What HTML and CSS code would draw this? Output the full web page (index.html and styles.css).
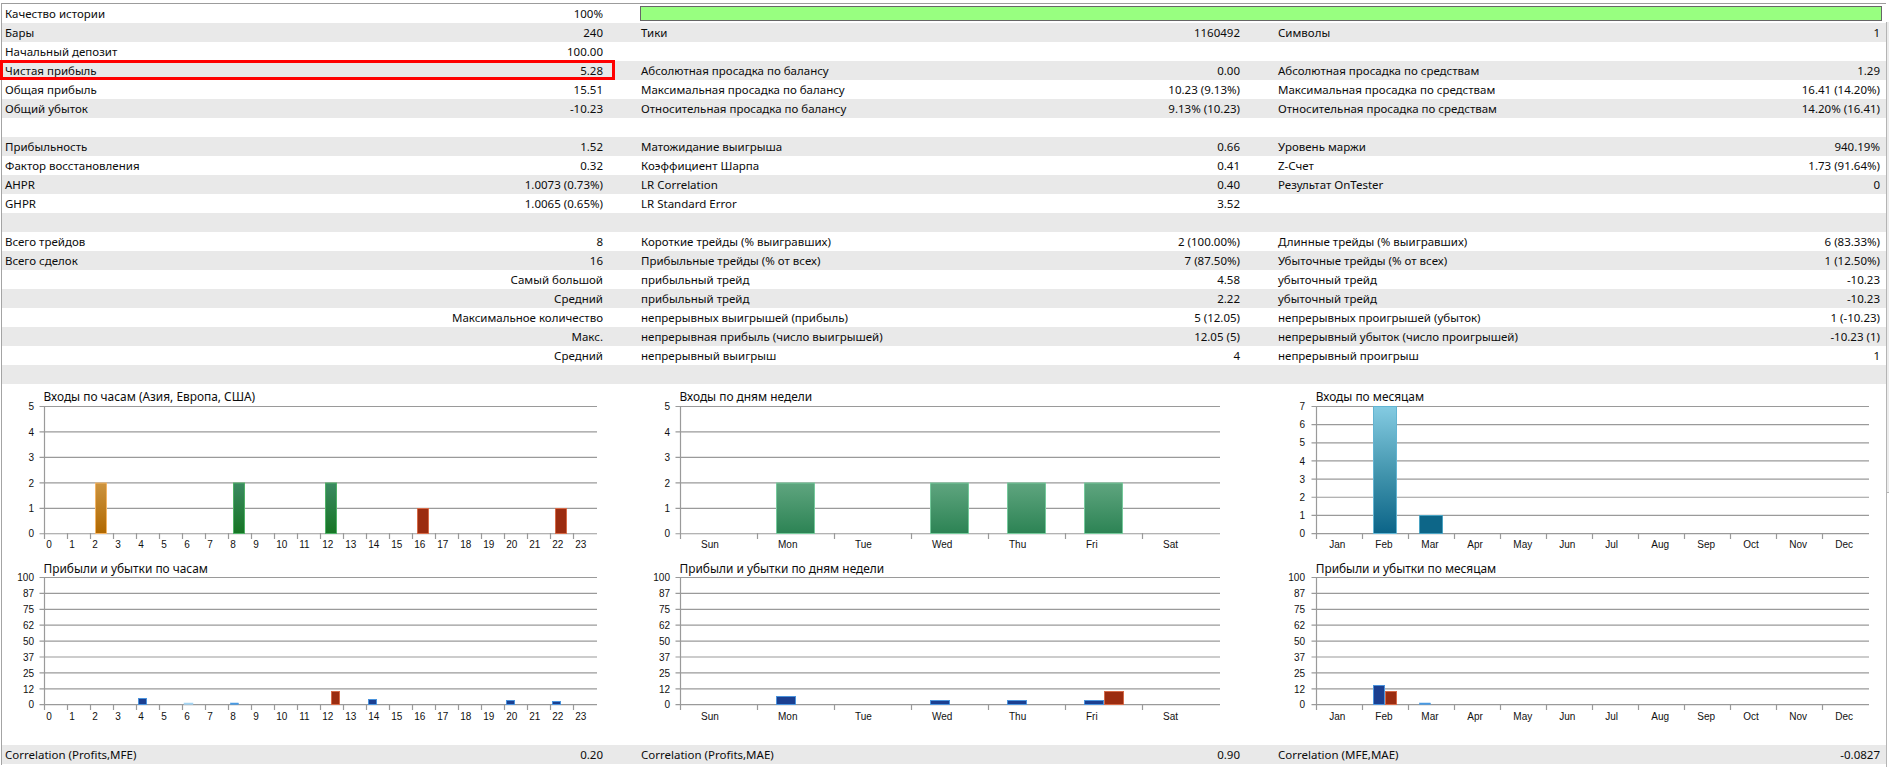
FILE: index.html
```html
<!DOCTYPE html>
<html lang="ru">
<head>
<meta charset="utf-8">
<title>Отчет тестера</title>
<link rel="stylesheet" href="styles.css">
</head>
<body>
<div class="window">
<main class="report">
<div class="row"><span>Качество истории</span><span class="v">100%</span><div class="quality"></div></div>
<div class="row"><span>Бары</span><span class="v">240</span><span>Тики</span><span class="v">1160492</span><span>Символы</span><span class="v">1</span></div>
<div class="row"><span>Начальный депозит</span><span class="v">100.00</span></div>
<div class="row hl"><span>Чистая прибыль</span><span class="v">5.28</span><span>Абсолютная просадка по балансу</span><span class="v">0.00</span><span>Абсолютная просадка по средствам</span><span class="v">1.29</span></div>
<div class="row"><span>Общая прибыль</span><span class="v">15.51</span><span>Максимальная просадка по балансу</span><span class="v">10.23 (9.13%)</span><span>Максимальная просадка по средствам</span><span class="v">16.41 (14.20%)</span></div>
<div class="row"><span>Общий убыток</span><span class="v">-10.23</span><span>Относительная просадка по балансу</span><span class="v">9.13% (10.23)</span><span>Относительная просадка по средствам</span><span class="v">14.20% (16.41)</span></div>
<div class="row"></div>
<div class="row"><span>Прибыльность</span><span class="v">1.52</span><span>Матожидание выигрыша</span><span class="v">0.66</span><span>Уровень маржи</span><span class="v">940.19%</span></div>
<div class="row"><span>Фактор восстановления</span><span class="v">0.32</span><span>Коэффициент Шарпа</span><span class="v">0.41</span><span>Z-Счет</span><span class="v">1.73 (91.64%)</span></div>
<div class="row"><span>AHPR</span><span class="v">1.0073 (0.73%)</span><span>LR Correlation</span><span class="v">0.40</span><span>Результат OnTester</span><span class="v">0</span></div>
<div class="row"><span>GHPR</span><span class="v">1.0065 (0.65%)</span><span>LR Standard Error</span><span class="v">3.52</span></div>
<div class="row"></div>
<div class="row"><span>Всего трейдов</span><span class="v">8</span><span>Короткие трейды (% выигравших)</span><span class="v">2 (100.00%)</span><span>Длинные трейды (% выигравших)</span><span class="v">6 (83.33%)</span></div>
<div class="row"><span>Всего сделок</span><span class="v">16</span><span>Прибыльные трейды (% от всех)</span><span class="v">7 (87.50%)</span><span>Убыточные трейды (% от всех)</span><span class="v">1 (12.50%)</span></div>
<div class="row"><span></span><span class="v">Самый большой</span><span>прибыльный трейд</span><span class="v">4.58</span><span>убыточный трейд</span><span class="v">-10.23</span></div>
<div class="row"><span></span><span class="v">Средний</span><span>прибыльный трейд</span><span class="v">2.22</span><span>убыточный трейд</span><span class="v">-10.23</span></div>
<div class="row"><span></span><span class="v">Максимальное количество</span><span>непрерывных выигрышей (прибыль)</span><span class="v">5 (12.05)</span><span>непрерывных проигрышей (убыток)</span><span class="v">1 (-10.23)</span></div>
<div class="row"><span></span><span class="v">Макс.</span><span>непрерывная прибыль (число выигрышей)</span><span class="v">12.05 (5)</span><span>непрерывный убыток (число проигрышей)</span><span class="v">-10.23 (1)</span></div>
<div class="row"><span></span><span class="v">Средний</span><span>непрерывный выигрыш</span><span class="v">4</span><span>непрерывный проигрыш</span><span class="v">1</span></div>
<div class="row"></div>

<section class="charts">
<!-- entries by hour -->
<svg class="chart" width="638" height="171" viewBox="2 384 638 171">
<defs>
<linearGradient id="orange" x2="0" y2="1"><stop offset="0" stop-color="#cc9440"/><stop offset="1" stop-color="#b06800"/></linearGradient>
<linearGradient id="green" x2="0" y2="1"><stop offset="0" stop-color="#3c8a62"/><stop offset="1" stop-color="#167524"/></linearGradient>
<linearGradient id="mint" x2="0" y2="1"><stop offset="0" stop-color="#5fa57f"/><stop offset="1" stop-color="#2c8354"/></linearGradient>
<linearGradient id="teal" x2="0" y2="1"><stop offset="0" stop-color="#84cbe2"/><stop offset=".55" stop-color="#3f92ab"/><stop offset="1" stop-color="#0b6488"/></linearGradient>
</defs>
<text class="title" x="43.5" y="401">Входы по часам (Азия, Европа, США)</text>
<path class="grid" d="M39.5 406.5H597M39.5 431.95H597M39.5 457.4H597M39.5 482.85H597M39.5 508.3H597M39.5 533.75H597"/>
<path class="grid" d="M44.5 406V539m23-6v6m23-6v6m23-6v6m23-6v6m23-6v6m23-6v6m23-6v6m23-6v6m23-6v6m23-6v6m23-6v6m23-6v6m23-6v6m23-6v6m23-6v6m23-6v6m23-6v6m23-6v6m23-6v6m23-6v6m23-6v6m23-6v6m23-6v6"/>
<g class="ya"><text x="34" y="410">5</text><text x="34" y="435.5">4</text><text x="34" y="461">3</text><text x="34" y="486.5">2</text><text x="34" y="512">1</text><text x="34" y="537.3">0</text></g>
<rect class="b-orange" x="95.5" y="483" width="11" height="50.5" fill="url(#orange)"/>
<rect class="b-green" x="233.5" y="483" width="11" height="50.5" fill="url(#green)"/>
<rect class="b-green" x="325.5" y="483" width="11" height="50.5" fill="url(#green)"/>
<rect class="b-red" x="417.5" y="508.5" width="11" height="25"/>
<rect class="b-red" x="555.5" y="508.5" width="11" height="25"/>
<g class="xa"><text x="46.3" y="548.4">0</text><text x="69.3" y="548.4">1</text><text x="92.3" y="548.4">2</text><text x="115.3" y="548.4">3</text><text x="138.3" y="548.4">4</text><text x="161.3" y="548.4">5</text><text x="184.3" y="548.4">6</text><text x="207.3" y="548.4">7</text><text x="230.3" y="548.4">8</text><text x="253.3" y="548.4">9</text><text x="276.3" y="548.4">10</text><text x="299.3" y="548.4">11</text><text x="322.3" y="548.4">12</text><text x="345.3" y="548.4">13</text><text x="368.3" y="548.4">14</text><text x="391.3" y="548.4">15</text><text x="414.3" y="548.4">16</text><text x="437.3" y="548.4">17</text><text x="460.3" y="548.4">18</text><text x="483.3" y="548.4">19</text><text x="506.3" y="548.4">20</text><text x="529.3" y="548.4">21</text><text x="552.3" y="548.4">22</text><text x="575.3" y="548.4">23</text></g>
</svg>
<!-- entries by weekday -->
<svg class="chart" width="629" height="171" viewBox="640 384 629 171">
<text class="title" x="679.5" y="401">Входы по дням недели</text>
<path class="grid" d="M675.5 406.5H1220M675.5 431.95H1220M675.5 457.4H1220M675.5 482.85H1220M675.5 508.3H1220M675.5 533.75H1220"/>
<path class="grid" d="M680.5 406V539m77-6v6m77-6v6m77-6v6m77-6v6m77-6v6m77-6v6"/>
<g class="ya"><text x="670" y="410">5</text><text x="670" y="435.5">4</text><text x="670" y="461">3</text><text x="670" y="486.5">2</text><text x="670" y="512">1</text><text x="670" y="537.3">0</text></g>
<rect class="b-mint" x="776.5" y="483" width="38" height="50.5" fill="url(#mint)"/>
<rect class="b-mint" x="930.5" y="483" width="38" height="50.5" fill="url(#mint)"/>
<rect class="b-mint" x="1007.5" y="483" width="38" height="50.5" fill="url(#mint)"/>
<rect class="b-mint" x="1084.5" y="483" width="38" height="50.5" fill="url(#mint)"/>
<g class="xa"><text x="701" y="548.4">Sun</text><text x="778" y="548.4">Mon</text><text x="855" y="548.4">Tue</text><text x="932" y="548.4">Wed</text><text x="1009" y="548.4">Thu</text><text x="1086" y="548.4">Fri</text><text x="1163" y="548.4">Sat</text></g>
</svg>
<!-- entries by month -->
<svg class="chart" width="617" height="171" viewBox="1269 384 617 171">
<text class="title" x="1315.7" y="401">Входы по месяцам</text>
<path class="grid" d="M1311.5 406.5H1869M1311.5 424.65H1869M1311.5 442.8H1869M1311.5 460.95H1869M1311.5 479.1H1869M1311.5 497.25H1869M1311.5 515.4H1869M1311.5 533.55H1869"/>
<path class="grid" d="M1316.5 406V539m46-6v6m46-6v6m46-6v6m46-6v6m46-6v6m46-6v6m46-6v6m46-6v6m46-6v6m46-6v6m46-6v6"/>
<g class="ya"><text x="1305" y="410">7</text><text x="1305" y="428.2">6</text><text x="1305" y="446.3">5</text><text x="1305" y="464.5">4</text><text x="1305" y="482.6">3</text><text x="1305" y="500.8">2</text><text x="1305" y="519">1</text><text x="1305" y="537.2">0</text></g>
<rect class="b-teal" x="1373.5" y="406.5" width="23" height="127" fill="url(#teal)"/>
<rect class="b-teal2" x="1419.5" y="515.5" width="23" height="18"/>
<g class="xa"><text x="1329.3" y="548.4">Jan</text><text x="1375.3" y="548.4">Feb</text><text x="1421.3" y="548.4">Mar</text><text x="1467.3" y="548.4">Apr</text><text x="1513.3" y="548.4">May</text><text x="1559.3" y="548.4">Jun</text><text x="1605.3" y="548.4">Jul</text><text x="1651.3" y="548.4">Aug</text><text x="1697.3" y="548.4">Sep</text><text x="1743.3" y="548.4">Oct</text><text x="1789.3" y="548.4">Nov</text><text x="1835.3" y="548.4">Dec</text></g>
</svg>
<!-- profit by hour -->
<svg class="chart" width="638" height="190" viewBox="2 555 638 190">
<text class="title" x="43.5" y="572.5">Прибыли и убытки по часам</text>
<path class="grid" d="M39.5 577.5H597M39.5 593.4H597M39.5 609.3H597M39.5 625.2H597M39.5 641.1H597M39.5 657H597M39.5 672.9H597M39.5 688.8H597M39.5 704.7H597"/>
<path class="grid" d="M44.5 577V710m23-6v6m23-6v6m23-6v6m23-6v6m23-6v6m23-6v6m23-6v6m23-6v6m23-6v6m23-6v6m23-6v6m23-6v6m23-6v6m23-6v6m23-6v6m23-6v6m23-6v6m23-6v6m23-6v6m23-6v6m23-6v6m23-6v6m23-6v6"/>
<g class="ya"><text x="34" y="581">100</text><text x="34" y="597">87</text><text x="34" y="613">75</text><text x="34" y="629">62</text><text x="34" y="644.8">50</text><text x="34" y="660.7">37</text><text x="34" y="676.6">25</text><text x="34" y="692.5">12</text><text x="34" y="708.4">0</text></g>
<rect class="b-blue" x="138.5" y="698.5" width="8" height="6"/>
<rect class="b-faint" x="184" y="703" width="9" height="1.5"/>
<rect class="b-sky" x="230.5" y="703" width="8" height="1.5"/>
<rect class="b-red" x="331.5" y="691.5" width="8" height="13"/>
<rect class="b-blue" x="368.5" y="699.5" width="8" height="5"/>
<rect class="b-blue" x="506.5" y="700.5" width="8" height="4"/>
<rect class="b-blue" x="552.5" y="701.5" width="8" height="3"/>
<g class="xa"><text x="46.3" y="719.6">0</text><text x="69.3" y="719.6">1</text><text x="92.3" y="719.6">2</text><text x="115.3" y="719.6">3</text><text x="138.3" y="719.6">4</text><text x="161.3" y="719.6">5</text><text x="184.3" y="719.6">6</text><text x="207.3" y="719.6">7</text><text x="230.3" y="719.6">8</text><text x="253.3" y="719.6">9</text><text x="276.3" y="719.6">10</text><text x="299.3" y="719.6">11</text><text x="322.3" y="719.6">12</text><text x="345.3" y="719.6">13</text><text x="368.3" y="719.6">14</text><text x="391.3" y="719.6">15</text><text x="414.3" y="719.6">16</text><text x="437.3" y="719.6">17</text><text x="460.3" y="719.6">18</text><text x="483.3" y="719.6">19</text><text x="506.3" y="719.6">20</text><text x="529.3" y="719.6">21</text><text x="552.3" y="719.6">22</text><text x="575.3" y="719.6">23</text></g>
</svg>
<!-- profit by weekday -->
<svg class="chart" width="629" height="190" viewBox="640 555 629 190">
<text class="title" x="679.5" y="572.5">Прибыли и убытки по дням недели</text>
<path class="grid" d="M675.5 577.5H1220M675.5 593.4H1220M675.5 609.3H1220M675.5 625.2H1220M675.5 641.1H1220M675.5 657H1220M675.5 672.9H1220M675.5 688.8H1220M675.5 704.7H1220"/>
<path class="grid" d="M680.5 577V710m77-6v6m77-6v6m77-6v6m77-6v6m77-6v6m77-6v6"/>
<g class="ya"><text x="670" y="581">100</text><text x="670" y="597">87</text><text x="670" y="613">75</text><text x="670" y="629">62</text><text x="670" y="644.8">50</text><text x="670" y="660.7">37</text><text x="670" y="676.6">25</text><text x="670" y="692.5">12</text><text x="670" y="708.4">0</text></g>
<rect class="b-blue" x="776.5" y="696.5" width="19" height="8"/>
<rect class="b-blue" x="930.5" y="700.5" width="19" height="4"/>
<rect class="b-blue" x="1007.5" y="700.5" width="19" height="4"/>
<rect class="b-blue" x="1084.5" y="700.5" width="19" height="4"/>
<rect class="b-red" x="1104.5" y="691.5" width="19" height="13"/>
<g class="xa"><text x="701" y="719.6">Sun</text><text x="778" y="719.6">Mon</text><text x="855" y="719.6">Tue</text><text x="932" y="719.6">Wed</text><text x="1009" y="719.6">Thu</text><text x="1086" y="719.6">Fri</text><text x="1163" y="719.6">Sat</text></g>
</svg>
<!-- profit by month -->
<svg class="chart" width="617" height="190" viewBox="1269 555 617 190">
<text class="title" x="1315.7" y="572.5">Прибыли и убытки по месяцам</text>
<path class="grid" d="M1311.5 577.5H1869M1311.5 593.4H1869M1311.5 609.3H1869M1311.5 625.2H1869M1311.5 641.1H1869M1311.5 657H1869M1311.5 672.9H1869M1311.5 688.8H1869M1311.5 704.7H1869"/>
<path class="grid" d="M1316.5 577V710m46-6v6m46-6v6m46-6v6m46-6v6m46-6v6m46-6v6m46-6v6m46-6v6m46-6v6m46-6v6m46-6v6"/>
<g class="ya"><text x="1305" y="581">100</text><text x="1305" y="597">87</text><text x="1305" y="613">75</text><text x="1305" y="629">62</text><text x="1305" y="644.8">50</text><text x="1305" y="660.7">37</text><text x="1305" y="676.6">25</text><text x="1305" y="692.5">12</text><text x="1305" y="708.4">0</text></g>
<rect class="b-blue" x="1373.5" y="685.5" width="11" height="19"/>
<rect class="b-red" x="1385.5" y="691.5" width="11" height="13"/>
<rect class="b-sky" x="1419.5" y="703" width="11" height="1.5"/>
<g class="xa"><text x="1329.3" y="719.6">Jan</text><text x="1375.3" y="719.6">Feb</text><text x="1421.3" y="719.6">Mar</text><text x="1467.3" y="719.6">Apr</text><text x="1513.3" y="719.6">May</text><text x="1559.3" y="719.6">Jun</text><text x="1605.3" y="719.6">Jul</text><text x="1651.3" y="719.6">Aug</text><text x="1697.3" y="719.6">Sep</text><text x="1743.3" y="719.6">Oct</text><text x="1789.3" y="719.6">Nov</text><text x="1835.3" y="719.6">Dec</text></g>
</svg>
</section>

<div class="row shade"><span>Correlation (Profits,MFE)</span><span class="v">0.20</span><span>Correlation (Profits,MAE)</span><span class="v">0.90</span><span>Correlation (MFE,MAE)</span><span class="v">-0.0827</span></div>
</main>
<div class="scrollbar"><div class="thumb"></div></div>
</div>
</body>
</html>
```
FILE: styles.css
```css
html, body {
  margin: 0;
  background: #fff;
  overflow: hidden;
}

.window {
  display: flex;
  width: 1889px;
  height: 767px;
  padding-top: 3px;
  box-sizing: border-box;
  font: 11.5px/20px "Noto Sans", "Liberation Sans", Arial, sans-serif;
  color: #0c0c0c;
}

.report {
  width: 1884px;
  height: 761px;
  margin-left: 1px;
  border-top: 1px solid #9c9c9c;
  border-left: 1px solid #a4a4a4;
  flex: none;
}

.row {
  display: grid;
  grid-template-columns: 300px 298px 338px 299px 338px 302px;
  height: 19px;
  padding-left: 3px;
  position: relative;
  white-space: nowrap;
}

.row:nth-child(even),
.row.shade {
  background: #e9e9e9;
}

.row > :nth-child(3),
.row > :nth-child(5) {
  padding-left: 38px;
}

.v {
  text-align: right;
}

.hl::after {
  content: "";
  position: absolute;
  left: -2px;
  top: -1px;
  width: 615px;
  height: 20px;
  box-sizing: border-box;
  border: 3px solid #ff0000;
}

.quality {
  grid-column: 3 / -1;
  height: 15px;
  margin: 2px -2px 0 37px;
  box-sizing: border-box;
  border: 1px solid #666;
  background: #98ff80;
}

.charts {
  display: grid;
  grid-template-columns: 638px 629px 617px;
  grid-template-rows: 171px 190px;
  width: 1884px;
}

.chart {
  display: block;
}

.title {
  font: 11.9px "Noto Sans", "Liberation Sans", Arial, sans-serif;
  fill: #0c0c0c;
}

.grid {
  fill: none;
  stroke: #9a9a9a;
  stroke-width: 1.2;
}

.ya text {
  font: 10px "Liberation Sans", Arial, sans-serif;
  text-anchor: end;
  fill: #111;
}

.xa text {
  font: 10px "Liberation Sans", Arial, sans-serif;
  fill: #111;
}

.b-orange { stroke: #f3b566; }
.b-green { stroke: #4fb066; }
.b-mint { stroke: #76c99c; }
.b-teal { stroke: #62b4d2; }
.b-teal2 { fill: #0d6688; stroke: #4ba3c2; }
.b-red { fill: #9b2c10; stroke: #d56a48; }
.b-blue { fill: #1b3f90; stroke: #4b93dc; }
.b-sky { fill: #4a9ae2; stroke: #4a9ae2; stroke-width: 0.5; }
.b-faint { fill: #a5d4f2; stroke: #a5d4f2; stroke-width: 0.5; }

.scrollbar {
  flex: 1;
  margin-top: 19px;
  border-left: 1px solid #b4b4b4;
}

.thumb {
  height: 470px;
  background: #ececec;
  border-bottom: 1px solid #b4b4b4;
}
```
